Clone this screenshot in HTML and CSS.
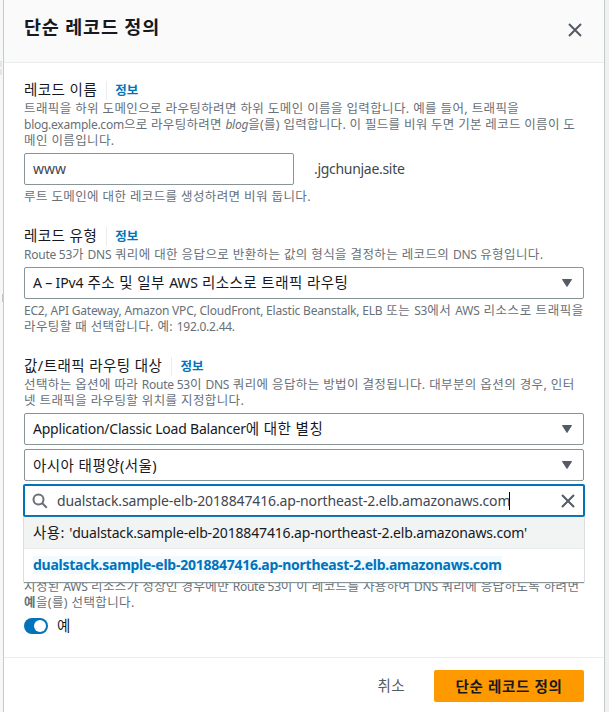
FILE: index.html
```html
<!DOCTYPE html>
<html lang="ko">
<head>
<meta charset="utf-8">
<title>단순 레코드 정의</title>
<link rel="stylesheet" href="styles.css">
</head>
<body>
<main class="panel">
  <header class="head">
    <h1>단순 레코드 정의</h1>
    <svg class="close" width="16" height="16" viewBox="0 0 16 16"><path d="M2 2l12 12M14 2L2 14"/></svg>
  </header>
  <div class="body">
    <section class="group">
      <div class="label"><span>레코드 이름</span><a>정보</a></div>
      <p class="hint"><span>트래픽을 하위 도메인으로 라우팅하려면 하위 도메인 이름을 입력합니다. 예를 들어, 트래픽을</span><span class="tight"><q>blog.example.com</q>으로 라우팅하려면 <q><i>blog</i></q>을(를) 입력합니다. 이 필드를 비워 두면 기본 레코드 이름이 도</span><span>메인 이름입니다.</span></p>
      <div class="name-row"><div class="field name"><span class="www">www</span></div><span class="domain">.jgchunjae.site</span></div>
      <p class="note"><span>루트 도메인에 대한 레코드를 생성하려면 비워 둡니다.</span></p>
    </section>
    <section class="group">
      <div class="label"><span>레코드 유형</span><a>정보</a></div>
      <p class="hint"><span><q>Route 53</q>가 <q>DNS</q> 쿼리에 대한 응답으로 반환하는 값의 형식을 결정하는 레코드의 <q>DNS</q> 유형입니다.</span></p>
      <div class="field"><span><q>A – IPv4</q> 주소 및 일부 <q>AWS</q> 리소스로 트래픽 라우팅</span><svg class="arrow" width="10" height="8" viewBox="0 0 10 8"><path d="M.5.5h9L5 7.5z"/></svg></div>
      <p class="note"><span class="services"><q>EC2, API Gateway, Amazon VPC, CloudFront, Elastic Beanstalk, ELB</q> 또는 <q>S3</q>에서 <q>AWS</q> 리소스로 트래픽을</span><span>라우팅할 때 선택합니다. 예: <q>192.0.2.44.</q></span></p>
    </section>
    <section class="group">
      <div class="label"><span>값/트래픽 라우팅 대상</span><a>정보</a></div>
      <p class="hint"><span>선택하는 옵션에 따라 <q>Route 53</q>이 <q>DNS</q> 쿼리에 응답하는 방법이 결정됩니다. 대부분의 옵션의 경우, 인터</span><span>넷 트래픽을 라우팅할 위치를 지정합니다.</span></p>
      <div class="fields">
        <div class="field"><span><q class="alias">Application/Classic Load Balancer</q>에 대한 별칭</span><svg class="arrow" width="10" height="8" viewBox="0 0 10 8"><path d="M.5.5h9L5 7.5z"/></svg></div>
        <div class="field"><span>아시아 태평양(서울)</span><svg class="arrow" width="10" height="8" viewBox="0 0 10 8"><path d="M.5.5h9L5 7.5z"/></svg></div>
        <div class="search">
          <svg class="lens" width="16" height="16" viewBox="0 0 16 16"><circle cx="6.5" cy="6.5" r="5"/><path d="M10.2 10.2l4.6 4.6"/></svg>
          <span class="query">dualstack.sample-elb-2018847416.ap-northeast-2.elb.amazonaws.com</span><i class="caret"></i>
          <svg class="clear" width="14" height="14" viewBox="0 0 14 14"><path d="M1 1l12 12M13 1L1 13"/></svg>
          <div class="menu">
            <div class="option use"><span>사용: <q>'dualstack.sample-elb-2018847416.ap-northeast-2.elb.amazonaws.com'</q></span></div>
            <div class="option match"><span>dualstack.sample-elb-2018847416.ap-northeast-2.elb.amazonaws.com</span></div>
          </div>
        </div>
      </div>
    </section>
    <section class="health">
      <p><span>지정된 <q>AWS</q> 리소스가 정상인 경우에만 <q>Route 53</q>이 이 레코드를 사용하여 <q>DNS</q> 쿼리에 응답하도록 하려면</span><span><b>예</b>을(를) 선택합니다.</span></p>
      <div class="toggle-row"><i class="toggle"></i><span>예</span></div>
    </section>
  </div>
  <footer class="foot"><span class="cancel">취소</span><button>단순 레코드 정의</button></footer>
</main>
</body>
</html>
```
FILE: styles.css
```css
* { box-sizing: border-box; }
body { margin: 0; height: 712px; overflow: hidden; background: linear-gradient(#e3e6e6, #e3e6e6) 0 61px / 2px 6px no-repeat, linear-gradient(#e3e6e6, #e3e6e6) 0 69px / 2px 6px no-repeat, linear-gradient(#c4c8c8, #c4c8c8) 2px 294px / 2px 8px no-repeat, linear-gradient(to right, #f6f8f8 3px, #f0f1f1 3px); font: 14.5px/20px "Noto Sans", "Noto Sans CJK KR", sans-serif; letter-spacing: .45px; color: #16191f; white-space: nowrap; }
q { quotes: none; font-size: 14px; letter-spacing: -.16px; }
.panel { width: 602px; height: 712px; margin-left: 3px; background: #fff; border-left: 1px solid #c5cbcb; border-right: 1px solid #c5cbcb; display: flex; flex-direction: column; }
.head { height: 63px; background: #fafafa; border-bottom: 1px solid #eaeded; padding: 0 21px 8px 20px; display: flex; align-items: center; justify-content: space-between; }
h1 { margin: 0; font-size: 18.5px; line-height: 22px; font-weight: 700; letter-spacing: .8px; }
svg path, svg circle { fill: none; stroke: #545b64; stroke-width: 2; }
.close { position: relative; top: 3px; }
.body { padding: 17px 20px 0; height: 594px; }
.group { margin-bottom: 21px; }
.label { display: flex; height: 20px; align-items: center; margin-bottom: 1px; }
.label span { padding-bottom: 2px; }
.label a { font-size: 12.5px; line-height: 18px; font-weight: 700; letter-spacing: .2px; color: #0073bb; margin-left: 9px; padding-left: 8px; border-left: 1px solid #eaeded; padding-top: 1px; }
p { margin: 0; font-size: 12.5px; line-height: 16px; letter-spacing: .38px; color: #687078; }
p q { font-size: 12px; letter-spacing: -.25px; }
p > span { display: block; width: max-content; height: 16px; }
.tight { letter-spacing: .3px; }
.services { letter-spacing: .58px; }
.services q { letter-spacing: -.2px; }
.alias { letter-spacing: -.22px; }
.hint { margin-bottom: 4px; }
.note { margin-top: 4px; }
.field { height: 32px; border: 1px solid #879596; border-radius: 2px; background: #fff; padding: 0 11px 0 8px; display: flex; align-items: center; justify-content: space-between; }
.field > span:not(.www) { padding-bottom: 1px; }
.arrow path { fill: #545b64; stroke: #545b64; stroke-width: 1; stroke-linejoin: round; }
.name-row { display: flex; align-items: center; gap: 20px; }
.name { width: 270px; }
.www, .domain, .query { color: #414750; font-size: 14px; letter-spacing: -.14px; }
.www { letter-spacing: 0; }
.domain { letter-spacing: -.3px; }
.fields { display: grid; gap: 4px; }
.search { position: relative; height: 33px; border: 2px solid #0073bb; border-radius: 2px; display: flex; align-items: center; padding: 0 8px 0 7px; margin: -1px -1px 0; }
.query { margin-left: 9px; }
.caret { width: 1px; height: 18px; background: #000; margin-left: -1px; }
.lens circle, .lens path { stroke: #687078; }
.clear { margin-left: auto; }
.menu { position: absolute; z-index: 2; left: -1px; right: -1px; top: 31px; height: 65px; background: #fff; box-shadow: 0 1px 1px #879596, 0 0 1px #879596; }
.option { height: 32px; padding: 0 9px; display: flex; align-items: center; }
.use { background: #f2f3f3; border-bottom: 1px solid #eaeded; }
.match { height: 31px; font-size: 14px; font-weight: 700; letter-spacing: -.26px; color: #0073bb; }
.match span { background: #f1faff; line-height: 18px; }
.health { padding-top: 41px; }
.toggle-row { display: flex; gap: 9px; align-items: center; margin-top: 5px; height: 20px; }
.toggle-row span { padding-bottom: 2px; }
.toggle { width: 24px; height: 16px; border-radius: 8px; background: #0073bb; display: flex; justify-content: flex-end; padding: 2px; }
.toggle::after { content: ""; width: 12px; height: 12px; border-radius: 50%; background: #fff; }
.foot { border-top: 1px solid #eaeded; height: 55px; padding: 12px 20px 10px; display: flex; justify-content: flex-end; align-items: center; gap: 29px; }
.cancel { color: #545b64; padding-bottom: 2px; }
button { width: 150px; height: 32px; border: 0; border-radius: 2px; background: #ff9900; color: #16191f; font: 700 14.5px/20px "Noto Sans", "Noto Sans CJK KR", sans-serif; letter-spacing: .65px; padding: 0 0 1px; }
```
